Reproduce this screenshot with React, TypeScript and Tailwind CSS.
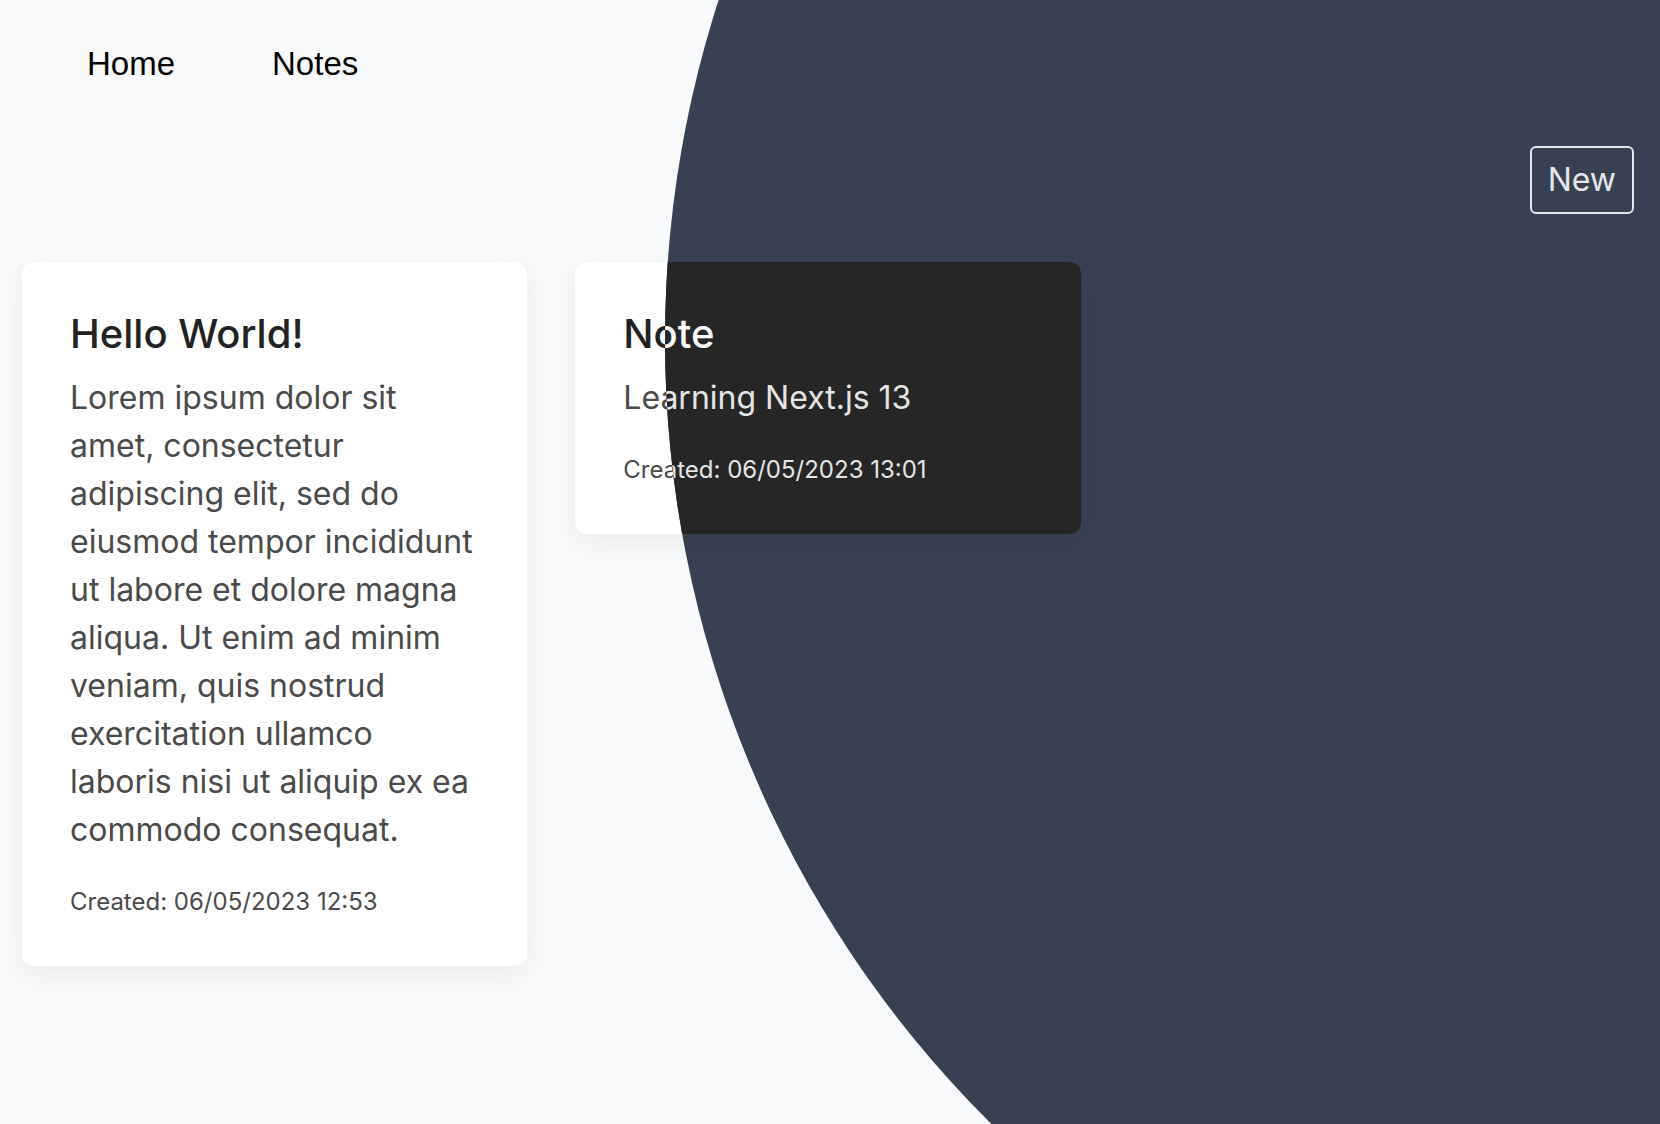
import React from 'react';

interface Note {
  id: number;
  title: string;
  body: string;
  created: string;
}

const NOTES: Note[] = [
  {
    id: 1,
    title: 'Hello World!',
    body: 'Lorem ipsum dolor sit amet, consectetur adipiscing elit, sed do eiusmod tempor incididunt ut labore et dolore magna aliqua. Ut enim ad minim veniam, quis nostrud exercitation ullamco laboris nisi ut aliquip ex ea commodo consequat.',
    created: '06/05/2023 12:53',
  },
  {
    id: 2,
    title: 'Note',
    body: 'Learning Next.js 13',
    created: '06/05/2023 13:01',
  },
];

function NoteCard({ note, dark }: { note: Note; dark: boolean }) {
  return (
    <div
      className={
        dark
          ? 'rounded-xl bg-[#262626] p-12 shadow-[0_8px_30px_rgba(0,0,0,0.06)]'
          : 'rounded-xl bg-white p-12 shadow-[0_8px_30px_rgba(0,0,0,0.06)]'
      }
    >
      <h2
        className={
          dark
            ? 'mb-4 text-[40px] leading-[48px] font-medium text-[#fafafa]'
            : 'mb-4 text-[40px] leading-[48px] font-medium text-[#222222]'
        }
      >
        {note.title}
      </h2>
      <p className={dark ? 'text-[32px] leading-[48px] text-[#e5e5e5]' : 'text-[32px] leading-[48px] text-[#4a4a4a]'}>
        {note.body}
      </p>
      <p className={dark ? 'mt-8 text-2xl text-[#e5e5e5]' : 'mt-8 text-2xl text-[#4a4a4a]'}>
        Created: {note.created}
      </p>
    </div>
  );
}

function Page({ dark }: { dark: boolean }) {
  return (
    <div
      className={
        dark
          ? 'min-h-[1124px] bg-[#374151] font-["Inter",sans-serif]'
          : 'min-h-[1124px] bg-[#f8f9fb] font-["Inter",sans-serif]'
      }
    >
      {/* Top nav */}
      <nav
        className={
          dark
            ? 'flex gap-[97px] pl-[87px] pt-[39px] font-["Liberation_Sans",Arial,sans-serif] text-[33px] text-white'
            : 'flex gap-[97px] pl-[87px] pt-[39px] font-["Liberation_Sans",Arial,sans-serif] text-[33px] text-black'
        }
      >
        <a href="#">Home</a>
        <a href="#">Notes</a>
      </nav>

      <main className="pl-[22px] pr-[26px]">
        <div className="flex justify-end pt-[57px]">
          <button
            className={
              dark
                ? 'rounded-md border-2 border-[#e5e7eb] px-4 py-2 text-[32px] leading-[48px] text-[#e5e7eb]'
                : 'rounded-md border-2 border-black px-4 py-2 text-[32px] leading-[48px] text-black'
            }
          >
            New
          </button>
        </div>

        <div className="mt-12 grid grid-cols-3 items-start gap-12">
          {NOTES.map((note) => (
            <NoteCard key={note.id} note={note} dark={dark} />
          ))}
        </div>
      </main>
    </div>
  );
}

export default function App() {
  return (
    <div className="relative min-h-[1124px] overflow-hidden">
      <Page dark={false} />
      {/* dark theme reveal */}
      <div className="absolute inset-0 [clip-path:circle(1105px_at_1770px_340px)]">
        <Page dark />
      </div>
    </div>
  );
}
